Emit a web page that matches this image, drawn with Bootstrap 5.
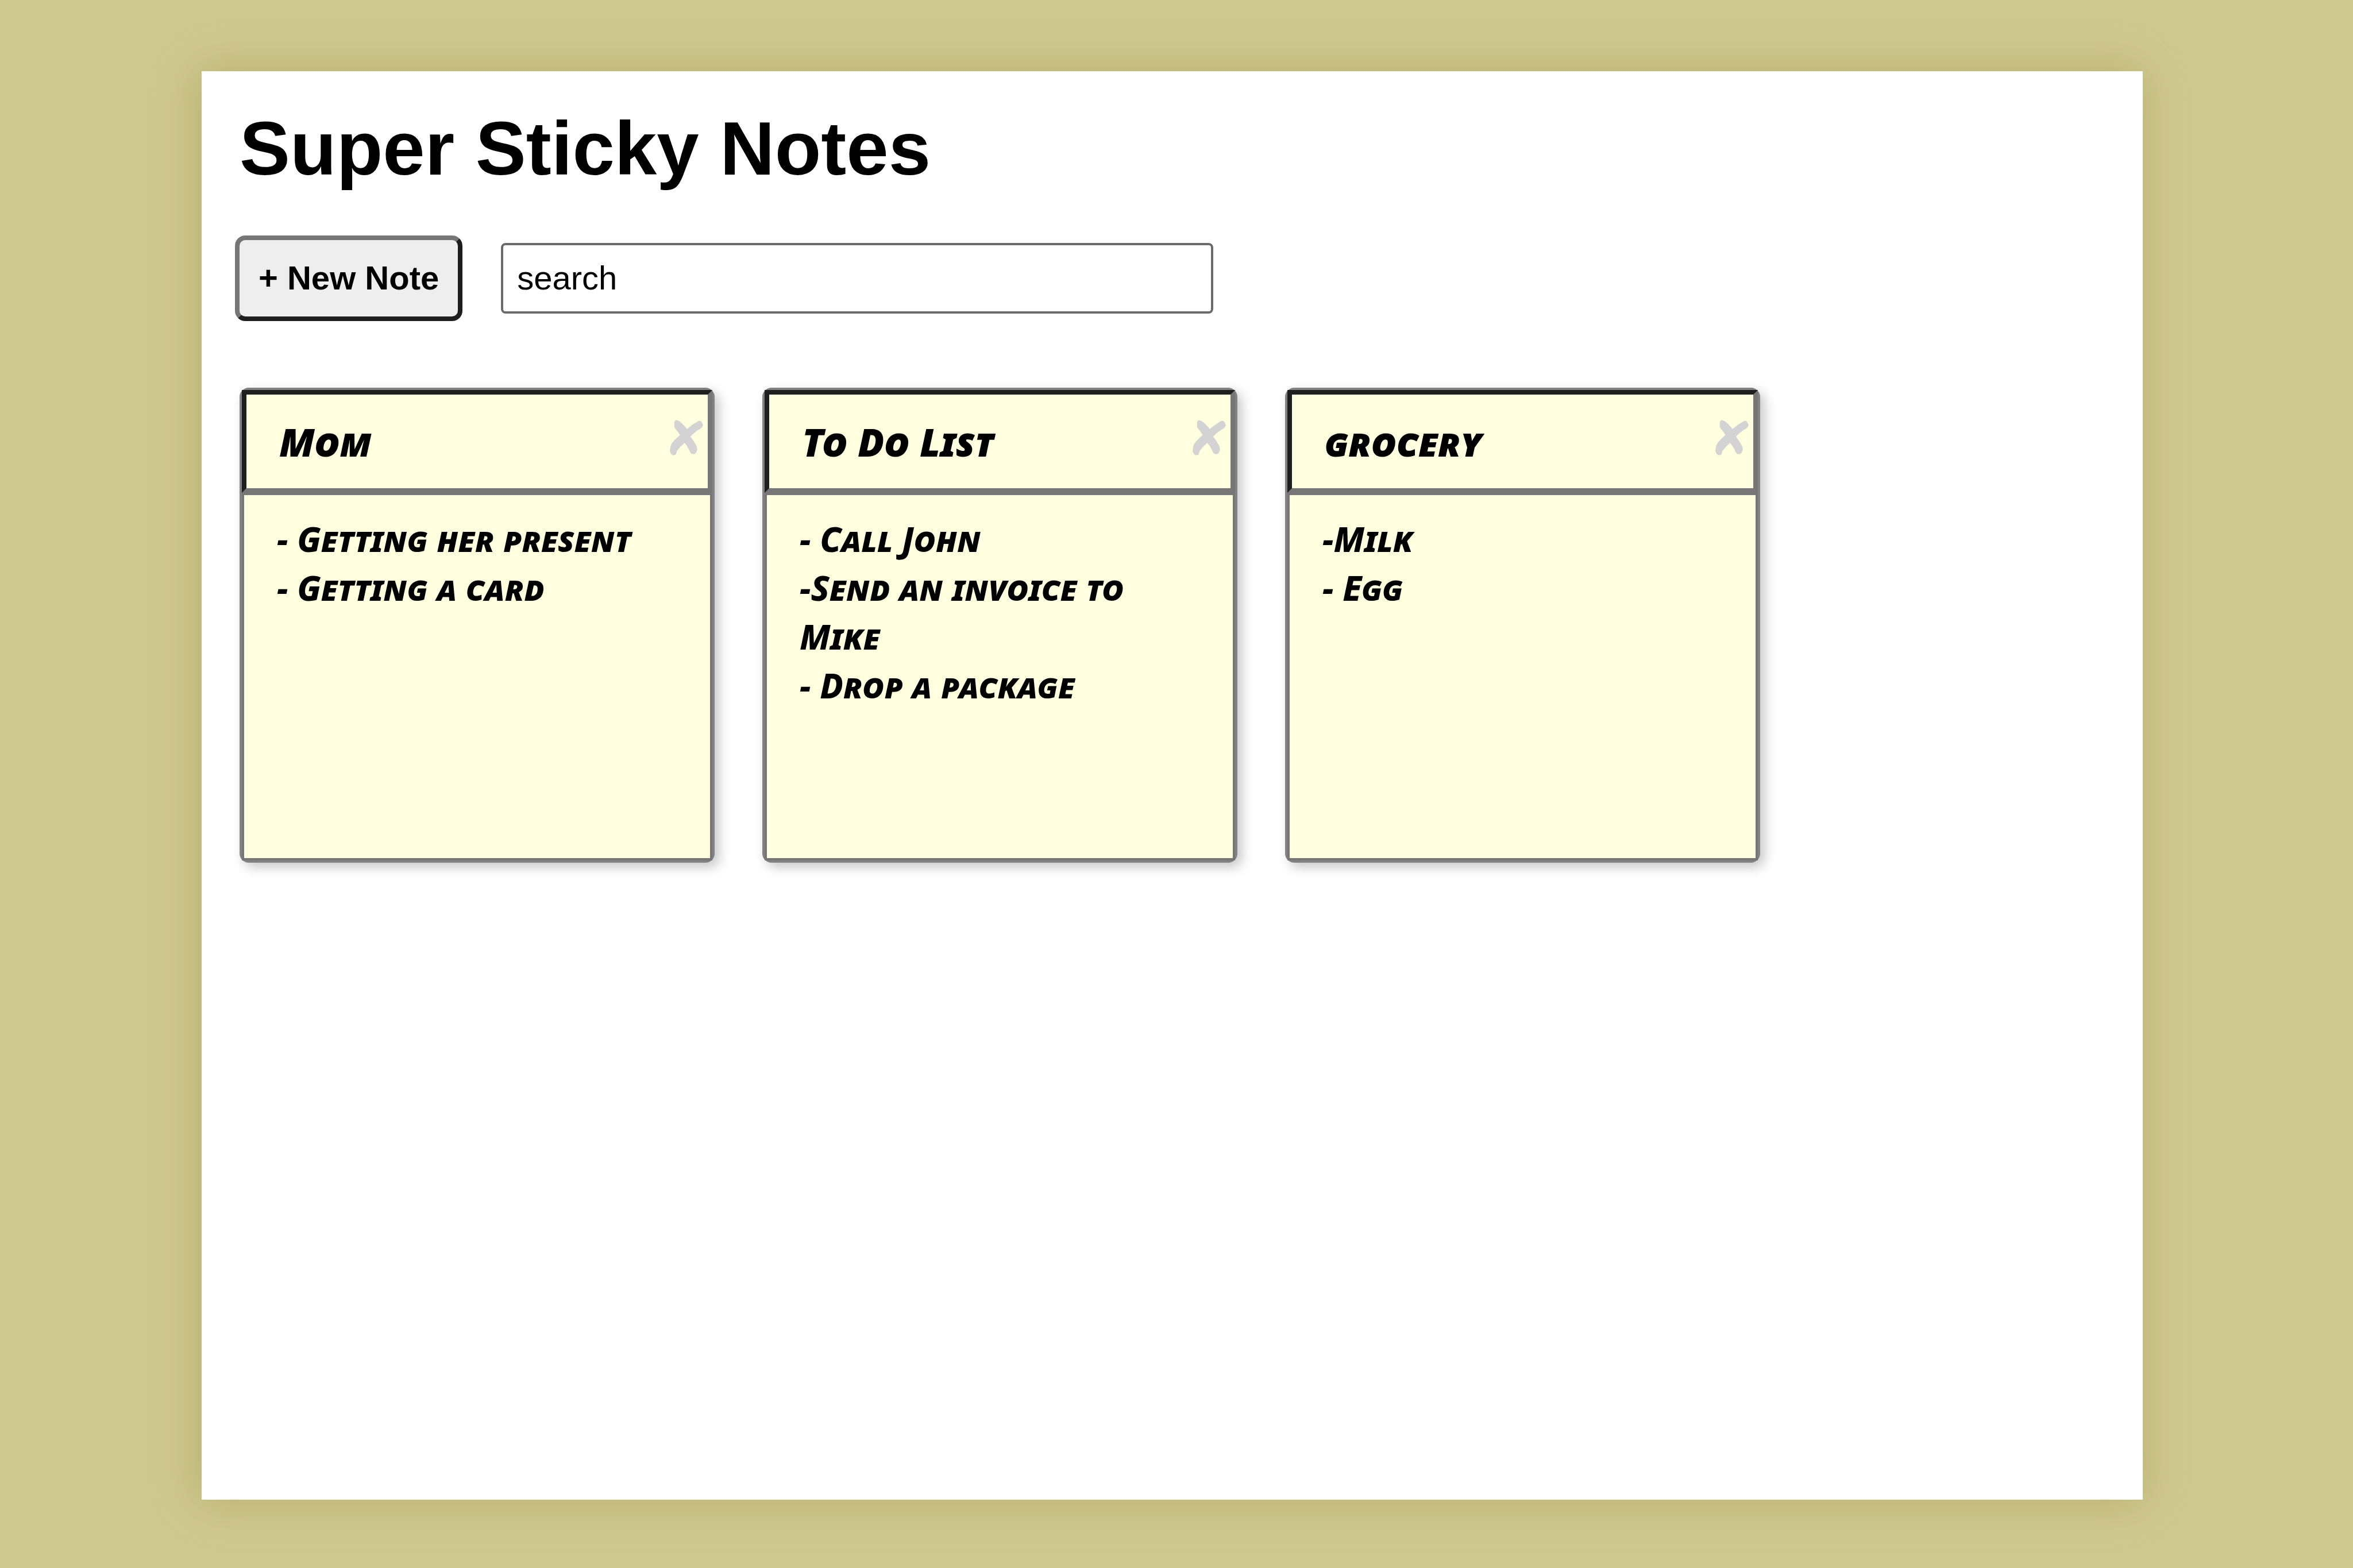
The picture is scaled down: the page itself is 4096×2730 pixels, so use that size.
<!DOCTYPE html>
<html lang="en">
<head>
<meta charset="utf-8">
<meta name="viewport" content="width=device-width, initial-scale=1">
<title>Super Sticky Notes</title>
<link href="https://cdn.jsdelivr.net/npm/bootstrap@5.3.0/dist/css/bootstrap.min.css" rel="stylesheet">
<style>
  body {
    background: #cec790;
    color: #000;
    font-family: "Liberation Sans", Arial, sans-serif;
    padding: 124px 366px 119px 351px;
  }
  .board {
    padding: 55px 58px;
    box-shadow: -4px 0 72px rgba(152, 143, 56, .4);
  }
  .board-title {
    font-size: 132px;
    line-height: 160px;
    margin-bottom: 71px;
  }
  .toolbar {
    gap: 67px;
    margin-bottom: 116px;
  }
  .new-note {
    height: 149px;
    padding: 0 33px 2px;
    border: 8px solid;
    border-color: #767676 #1e1e1e #1e1e1e #767676;
    border-radius: 18px;
    background: #eee;
    color: #000;
    font-size: 58px;
    font-weight: 700;
  }
  .search-box {
    width: 1240px;
    height: 123px;
    padding: 0 24px 2px;
    border: 4px solid #6b6b6b;
    border-radius: 8px;
    color: #000;
    font-size: 58px;
  }
  .search-box::placeholder { color: #000; opacity: 1; }
  .notes { gap: 83px; }
  .note {
    width: 827px;
    height: 827px;
    border: 4px solid #828282;
    border-radius: 16px;
    background: #ffffe0;
    box-shadow: 8px 8px 20px rgba(0, 0, 0, .22);
  }
  .note-title,
  .note-text {
    background: #ffffe0;
    color: #000;
    font-family: "Noto Sans", sans-serif;
    font-style: italic;
    font-variant: small-caps;
    border-radius: 0;
    outline: 0;
  }
  .note-title {
    height: 179px;
    padding: 0 57px;
    border: 8px solid;
    border-color: #1e1e1e #767676 #767676 #1e1e1e;
    font-size: 68px;
    font-weight: 900;
  }
  .note-text {
    padding: 34px 57px;
    border: 4px solid #767676;
    font-size: 60px;
    font-weight: 800;
    line-height: 85px;
    resize: none;
    overflow: hidden;
  }
  .note-close {
    top: 52px;
    right: 16px;
    color: #d3d3d3;
  }
  .note-close svg { width: 58px; height: 62px; }
</style>
</head>
<body class="d-flex min-vh-100">
<svg class="d-none" aria-hidden="true">
  <symbol id="cross" viewBox="0 0 210 225">
    <path fill="currentColor" d="M28 14Q32 4 40 1Q48 6 58 7Q84 26 108 58Q142 29 178 8Q190 3 197 9Q203 16 205 24Q211 31 209 38Q204 48 194 55Q160 73 130 105Q154 136 168 165Q174 177 173 188Q170 198 165 210Q156 218 148 217Q137 218 131 208Q126 202 124 194Q112 167 93 145Q65 168 43 199Q42 210 38 219Q27 226 16 222Q6 217 4 207Q-2 198 1 187Q2 166 13 147Q33 121 64 96Q50 72 33 54Q26 42 28 30Z"/>
  </symbol>
</svg>

<main class="board bg-white flex-grow-1">
  <h1 class="board-title fw-bold ps-2">Super Sticky Notes</h1>

  <div class="toolbar d-flex flex-wrap align-items-center">
    <button type="button" class="new-note">+ New Note</button>
    <input type="text" class="search-box mw-100" placeholder="search" aria-label="Search notes">
  </div>

  <div class="notes d-flex flex-wrap ps-2">
    <article class="note position-relative d-flex flex-column">
      <input type="text" class="note-title w-100" value="Mom" aria-label="Note title">
      <textarea class="note-text w-100 flex-grow-1" aria-label="Note text">- Getting her present
- Getting a card</textarea>
      <button type="button" class="note-close btn border-0 p-0 d-flex position-absolute" aria-label="Delete note"><svg aria-hidden="true"><use href="#cross"/></svg></button>
    </article>

    <article class="note position-relative d-flex flex-column">
      <input type="text" class="note-title w-100" value="To Do List" aria-label="Note title">
      <textarea class="note-text w-100 flex-grow-1" aria-label="Note text">- Call John
-Send an invoice to Mike
- Drop a package</textarea>
      <button type="button" class="note-close btn border-0 p-0 d-flex position-absolute" aria-label="Delete note"><svg aria-hidden="true"><use href="#cross"/></svg></button>
    </article>

    <article class="note position-relative d-flex flex-column">
      <input type="text" class="note-title w-100" value="grocery" aria-label="Note title">
      <textarea class="note-text w-100 flex-grow-1" aria-label="Note text">-Milk
- Egg</textarea>
      <button type="button" class="note-close btn border-0 p-0 d-flex position-absolute" aria-label="Delete note"><svg aria-hidden="true"><use href="#cross"/></svg></button>
    </article>
  </div>
</main>
<script src="https://cdn.jsdelivr.net/npm/bootstrap@5.3.0/dist/js/bootstrap.bundle.min.js"></script>
</body>
</html>
